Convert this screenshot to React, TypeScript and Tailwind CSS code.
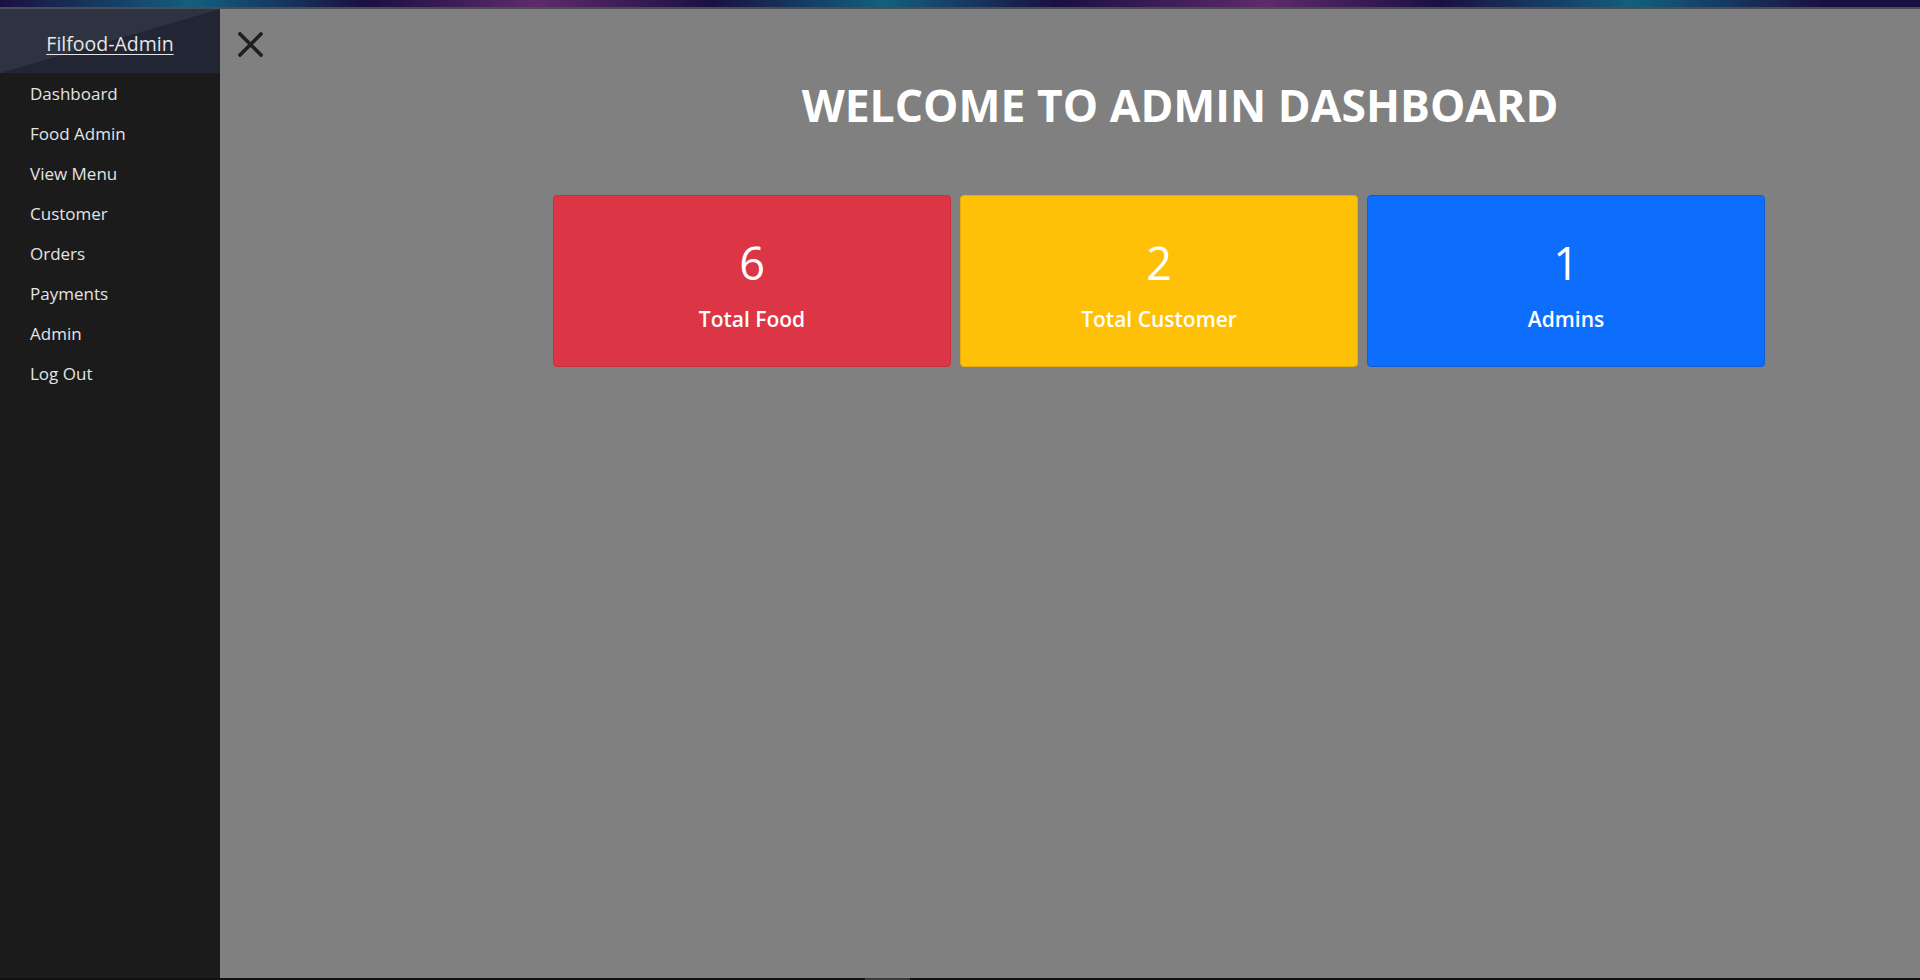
// Admin dashboard: dark sidebar + grey main area with stat cards
const navItems = [
  "Dashboard",
  "Food Admin",
  "View Menu",
  "Customer",
  "Orders",
  "Payments",
  "Admin",
  "Log Out",
];

const stats = [
  { value: 6, label: "Total Food", bg: "bg-[#dc3545]", border: "border-[#c9303f]" },
  { value: 2, label: "Total Customer", bg: "bg-[#ffc107]", border: "border-[#e8ae06]" },
  { value: 1, label: "Admins", bg: "bg-[#0d6efd]", border: "border-[#0b5ed7]" },
];

export default function App() {
  return (
    <div
      className="h-screen w-full flex flex-col overflow-hidden bg-[#111]"
      style={{ fontFamily: '"Open Sans", "Noto Sans", sans-serif' }}
    >
      {/* window chrome strip */}
      <div className="h-[7px] bg-[linear-gradient(to_right,#1a1040_0%,#12607e_10%,#1a1040_19%,#5f2b68_28%,#1a1040_37%,#12607e_46%,#1a1040_55%,#5f2b68_66%,#1a1040_75%,#12607e_85%,#1a1040_95%)]" />
      <div className="h-[2px] bg-[#4a4d57]" />

      <div className="flex-1 flex min-h-0">
        {/* Sidebar */}
        <aside className="w-[220px] shrink-0 bg-[#1b1b1b] flex flex-col">
          <div className="h-[64px] flex items-center justify-center pt-[6px] bg-[linear-gradient(to_bottom_right,#2d3340_50%,#222533_50%)]">
            <a href="#" className="text-[#e6e6e6] text-[19.5px] underline underline-offset-[3px]">
              Filfood-Admin
            </a>
          </div>
          <nav className="flex flex-col">
            {navItems.map((item) => (
              <a
                key={item}
                href="#"
                className="h-[40px] flex items-center pl-[30px] pt-[2px] text-[17px] text-[#e4e4e4]"
              >
                {item}
              </a>
            ))}
          </nav>
        </aside>

        {/* Main */}
        <main className="flex-1 bg-[#808080] flex flex-col">
          <div className="pt-[23px] pl-[18px]">
            <button className="w-[25px] h-[25px] block">
              <svg viewBox="0 0 25 25" className="w-[25px] h-[25px]">
                <path d="M2 2 L23 23 M23 2 L2 23" stroke="#1e1e1e" strokeWidth="3.6" strokeLinecap="square" />
              </svg>
            </button>
          </div>

          <div className="ml-[333px] w-[1212px] flex flex-col">
            <h1 className="mt-[20px] pl-[42px] text-center text-white text-[44.5px] font-bold leading-[56px]">
              WELCOME TO ADMIN DASHBOARD
            </h1>

            <div className="mt-[62px] grid grid-cols-3 gap-[9px]">
              {stats.map((s) => (
                <div
                  key={s.label}
                  className={`h-[172px] rounded-[4px] border ${s.bg} ${s.border} flex flex-col items-center text-white pt-[39px]`}
                >
                  <div className="text-[45px] font-medium leading-[56px]">{s.value}</div>
                  <div className="mt-[13px] text-[21px] font-semibold leading-[30px]">{s.label}</div>
                </div>
              ))}
            </div>
          </div>
        </main>
      </div>

      {/* bottom edge */}
      <div className="h-[2px] bg-[#111] flex">
        <div className="ml-[865px] w-[45px] bg-[#3a3a3a]" />
      </div>
    </div>
  );
}
